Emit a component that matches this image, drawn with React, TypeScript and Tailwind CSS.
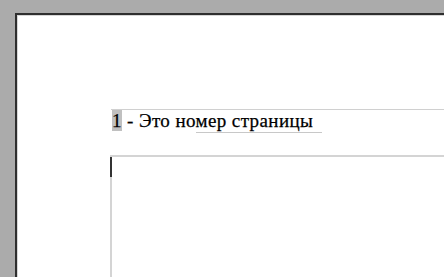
export default function App() {
  return (
    <div className="w-[444px] h-[277px] overflow-hidden bg-[#ababab] pt-[13px] pl-[15px] flex">
      {/* page */}
      <div className="flex-1 bg-white border-l-2 border-t-2 border-[#2e2e2e] shadow-[inset_1px_1px_0_#d6d6d6] pt-[94px] pl-[94px] flex flex-col">
        {/* header */}
        <div className="border-t border-[#d0d0d0] h-[46px] pl-px">
          <p className="[font-family:'Liberation_Serif','Times_New_Roman',serif] text-[19px] leading-[22px] tracking-[0.4px] text-black whitespace-nowrap [-webkit-text-stroke:0.25px_#000]">
            <span className="bg-[#c0c0c0]">1</span>{" - Это но"}
            <span className="border-b border-[#c8c8c8] pr-[9px] pb-px">мер страницы</span>
          </p>
        </div>

        {/* body */}
        <div className="flex-1 border-t-2 border-l-2 border-[#d4d4d4] -ml-px">
          <div className="w-[2px] h-[20px] bg-[#333] -ml-[2px]" />
        </div>
      </div>
    </div>
  );
}
